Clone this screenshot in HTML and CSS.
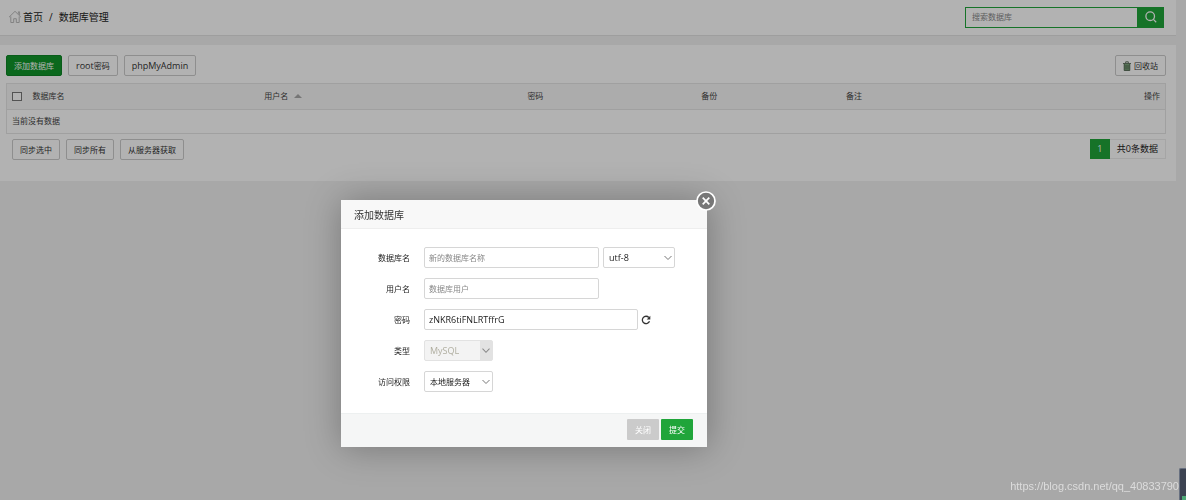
FILE: index.html
```html
<!DOCTYPE html>
<html lang="zh-CN">
<head>
<meta charset="utf-8">
<title>数据库管理</title>
<link rel="stylesheet" href="styles.css">
</head>
<body>
<header class="topbar">
  <nav class="crumbs">
    <svg class="home" viewBox="0 0 14 14" aria-hidden="true"><path d="M1 7.2 7 1.3l6 5.9M10.4 3.8V1.8h1.2V5M2.8 6.4v6.1h2.9V8.7h2.6v3.8h2.9V6.4"/></svg>
    <a href="#">首页</a><span class="slash">/</span><span>数据库管理</span>
  </nav>
  <form class="search">
    <input type="text" placeholder="搜索数据库" aria-label="搜索数据库">
    <button type="button" aria-label="搜索"><svg viewBox="0 0 12 12"><circle cx="5.2" cy="5.2" r="4.3"/><path d="m8.4 8.4 2.8 2.8"/></svg></button>
  </form>
</header>
<main class="panel">
  <div class="toolbar">
    <button class="btn primary" type="button">添加数据库</button>
    <button class="btn latin" type="button">root<span class="han">密码</span></button>
    <button class="btn latin" type="button">phpMyAdmin</button>
    <button class="btn recycle" type="button"><svg viewBox="0 0 8 10" aria-hidden="true"><path class="can" d="M1 3h6v6.5H1z"/><path class="ribs" d="M0 2.5h8M2.7 2V.8h2.6V2M1.2 3v6.5h5.6V3M3 4v4.5M5 4v4.5"/></svg>回收站</button>
  </div>
  <table class="grid">
    <colgroup><col class="c-check"><col class="c-name"><col class="c-user"><col class="c-pass"><col class="c-backup"><col><col class="c-op"></colgroup>
    <thead>
      <tr><th><input type="checkbox" aria-label="全选"></th><th>数据库名</th><th>用户名<span class="sort"></span></th><th>密码</th><th>备份</th><th>备注</th><th class="right">操作</th></tr>
    </thead>
    <tbody><tr><td colspan="7">当前没有数据</td></tr></tbody>
  </table>
  <div class="footbar">
    <button class="btn" type="button">同步选中</button>
    <button class="btn" type="button">同步所有</button>
    <button class="btn" type="button">从服务器获取</button>
    <div class="pager"><span class="current">1</span><span class="total">共0条数据</span></div>
  </div>
</main>
<div class="shade"></div>
<section class="dialog" role="dialog" aria-labelledby="dialog-title">
  <h2 id="dialog-title">添加数据库</h2>
  <button class="close" type="button" aria-label="关闭窗口"><svg viewBox="0 0 20 20"><circle cx="10" cy="10" r="9"/><path d="m6.7 6.7 6.6 6.6m0-6.6-6.6 6.6"/></svg></button>
  <form>
    <div class="fields">
      <div class="row"><label for="db">数据库名</label><input class="mid" id="db" type="text" placeholder="新的数据库名称"><select class="charset" aria-label="编码"><option>utf-8</option></select></div>
      <div class="row"><label for="user">用户名</label><input class="mid" id="user" type="text" placeholder="数据库用户"></div>
      <div class="row"><label for="pass">密码</label><input class="long" id="pass" type="text" value="zNKR6tiFNLRTffrG"><button class="refresh" type="button" aria-label="随机密码"><svg viewBox="0 0 10 10"><path class="arc" d="M8.5 6.3A3.7 3.7 0 1 1 7.8 2.5"/><path class="tip" d="M9.3.8v3.6H5.7z"/></svg></button></div>
      <div class="row"><label for="type">类型</label><select class="short" id="type" disabled><option>MySQL</option></select></div>
      <div class="row"><label for="access">访问权限</label><select class="short han" id="access"><option>本地服务器</option></select></div>
    </div>
    <div class="actions"><button class="cancel" type="button">关闭</button><button class="submit" type="button">提交</button></div>
  </form>
</section>
<div class="watermark">https://blog.csdn.net/qq_40833790</div>
<div class="gadget"></div>
</body>
</html>
```
FILE: styles.css
```css
* { box-sizing: border-box; }
body {
  margin: 0;
  min-height: 100vh;
  background: #f1f1f1;
  color: #333;
  font: 8px/12px "Open Sans", "Noto Sans CJK SC", sans-serif;
  overflow: hidden;
}
button, input, select { font: inherit; color: inherit; margin: 0; }
button { cursor: pointer; }
svg { fill: none; display: block; }
.topbar {
  display: flex;
  justify-content: space-between;
  align-items: center;
  height: 36px;
  margin-right: 10px;
  padding: 0 12px 1px 8px;
  background: #fff;
  border-bottom: 1px solid #e2e2e2;
}
.crumbs { display: flex; align-items: center; font-size: 10px; color: #222; }
.crumbs a { color: inherit; text-decoration: none; }
.home { width: 14px; height: 14px; margin-right: 1px; stroke: #bbb; }
.slash { margin: 0 6px; }
.search { display: flex; width: 199px; height: 21px; }
.search input {
  flex: 1;
  min-width: 0;
  padding: 0 6px;
  border: 1px solid #20a53a;
  border-right: 0;
  background: #fff;
}
.search button {
  display: grid;
  place-items: center;
  width: 27px;
  padding: 0;
  border: 0;
  background: #20a53a;
}
.search svg { width: 12px; height: 12px; stroke: #fff; stroke-width: 1.3; }
::placeholder { color: #888; opacity: 1; }
.panel { margin: 9px 10px 0 0; padding: 10px 10px 21px 6px; background: #fff; }
.toolbar, .footbar { display: flex; gap: 6px; }
.btn {
  display: flex;
  align-items: center;
  height: 21px;
  padding: 0 7px;
  border: 1px solid #ccc;
  border-radius: 2px;
  background: #fff;
  color: #333;
}
.latin { font-size: 9px; }
.han { font-size: 8px; }
.primary { background: #10952a; border-color: #0e8526; color: #fff; }
.recycle { margin-left: auto; gap: 3px; }
.recycle svg { width: 8px; height: 10px; }
.can { fill: #7ba77b; }
.ribs { stroke: #526652; stroke-width: .9; }
.grid {
  width: 100%;
  margin: 7px 0 5px;
  table-layout: fixed;
  border-collapse: collapse;
  border: 1px solid #e6e6e6;
}
.grid th, .grid td { padding: 0 5px 1px; text-align: left; font-weight: 400; color: #444; }
.grid th { height: 26px; background: #f6f6f6; border-bottom: 1px solid #e6e6e6; }
.grid td { height: 24px; }
.grid .right { text-align: right; }
.grid input {
  display: block;
  appearance: none;
  width: 10px;
  height: 9px;
  border: 1px solid #777;
  background: #fff;
}
.c-check { width: 21px; }
.c-name { width: 20%; }
.c-user { width: 22.7%; }
.c-pass { width: 15%; }
.c-backup { width: 12.5%; }
.c-op { width: 60px; }
.sort {
  display: inline-block;
  margin-left: 6px;
  border: 4px solid transparent;
  border-top: 0;
  border-bottom-color: #aaa;
  vertical-align: 1px;
}
.footbar { padding-left: 6px; }
.pager { display: flex; margin-left: auto; height: 20px; font-size: 9px; line-height: 18px; color: #222; }
.current { width: 20px; border: 1px solid #20a53a; background: #20a53a; color: #fff; text-align: center; }
.total { padding: 0 7px; border: 1px solid #ececec; border-left: 0; }
.shade { position: fixed; inset: 0; background: rgba(0, 0, 0, .3); }
.dialog {
  position: absolute;
  left: 341px;
  top: 200px;
  width: 366px;
  background: #fff;
  box-shadow: 1px 1px 34px rgba(0, 0, 0, .3);
}
.dialog h2 {
  margin: 0;
  padding: 2px 13px 0;
  background: #f8f8f8;
  border-bottom: 1px solid #eee;
  font-size: 10px;
  font-weight: 400;
  line-height: 26px;
  color: #333;
}
.close { position: absolute; right: -9px; top: -9px; padding: 0; border: 0; background: none; }
.close svg { width: 20px; height: 20px; stroke: #fff; stroke-width: 1.7; }
.close circle { fill: #777; }
.fields { display: grid; gap: 10px; padding: 18px 14px 21px; }
.row { display: flex; align-items: center; height: 21px; color: #222; }
.row label { width: 55px; margin-right: 14px; text-align: right; }
.row input, .row select {
  height: 21px;
  border: 1px solid #d6d6d6;
  border-radius: 2px;
  background-color: #fff;
}
.row input { padding: 0 4px; }
.row select {
  appearance: none;
  padding: 0 5px;
  background-image: url("data:image/svg+xml,%3Csvg xmlns='http://www.w3.org/2000/svg' width='8' height='6'%3E%3Cpath d='M.5 1 4 4.5 7.5 1' fill='none' stroke='%23777'/%3E%3C/svg%3E");
  background-repeat: no-repeat;
  background-position: right 2px center;
}
.row .mid { width: 175px; }
.row .long { width: 214px; font-size: 9px; }
.row .charset { width: 72px; margin-left: 4px; font-size: 9px; }
.row .short { width: 69px; }
.row #type {
  font-size: 9px;
  color: #b0aea0;
  opacity: 1;
  border-color: #e2e2e2;
  background-color: #f3f3f3;
  background-image: url("data:image/svg+xml,%3Csvg xmlns='http://www.w3.org/2000/svg' width='12' height='20'%3E%3Cpath d='M0 0h12v20H0z' fill='%23e2e2e2'/%3E%3Cpath d='M2.5 8 6 11.5 9.5 8' fill='none' stroke='%23888'/%3E%3C/svg%3E");
  background-position: right center;
}
.refresh { margin-left: 3px; padding: 0; border: 0; background: none; }
.refresh svg { width: 10px; height: 10px; }
.arc { stroke: #333; stroke-width: 1.3; }
.tip { fill: #333; }
.actions {
  display: flex;
  justify-content: flex-end;
  gap: 2px;
  padding: 5px 14px 7px;
  background: #f5f6f6;
  border-top: 1px solid #edf0f0;
}
.actions button { width: 32px; height: 21px; padding: 0; border: 0; border-radius: 1px; color: #fff; }
.actions .cancel { background: #cbcbcb; }
.actions .submit { background: #20a53a; }
.watermark {
  position: fixed;
  right: 7px;
  bottom: 7px;
  font: 11px/13px "Liberation Sans", sans-serif;
  color: #dcdcdc;
}
.gadget {
  position: fixed;
  right: 0;
  bottom: 0;
  width: 7px;
  height: 32px;
  border: 1px solid #687080;
  border-width: 1px 0 0 1px;
  border-radius: 2px 0 0;
  background: linear-gradient(#3c4352 27px, #4da876 27px) no-repeat 2px 0, #3c4352;
}
```
